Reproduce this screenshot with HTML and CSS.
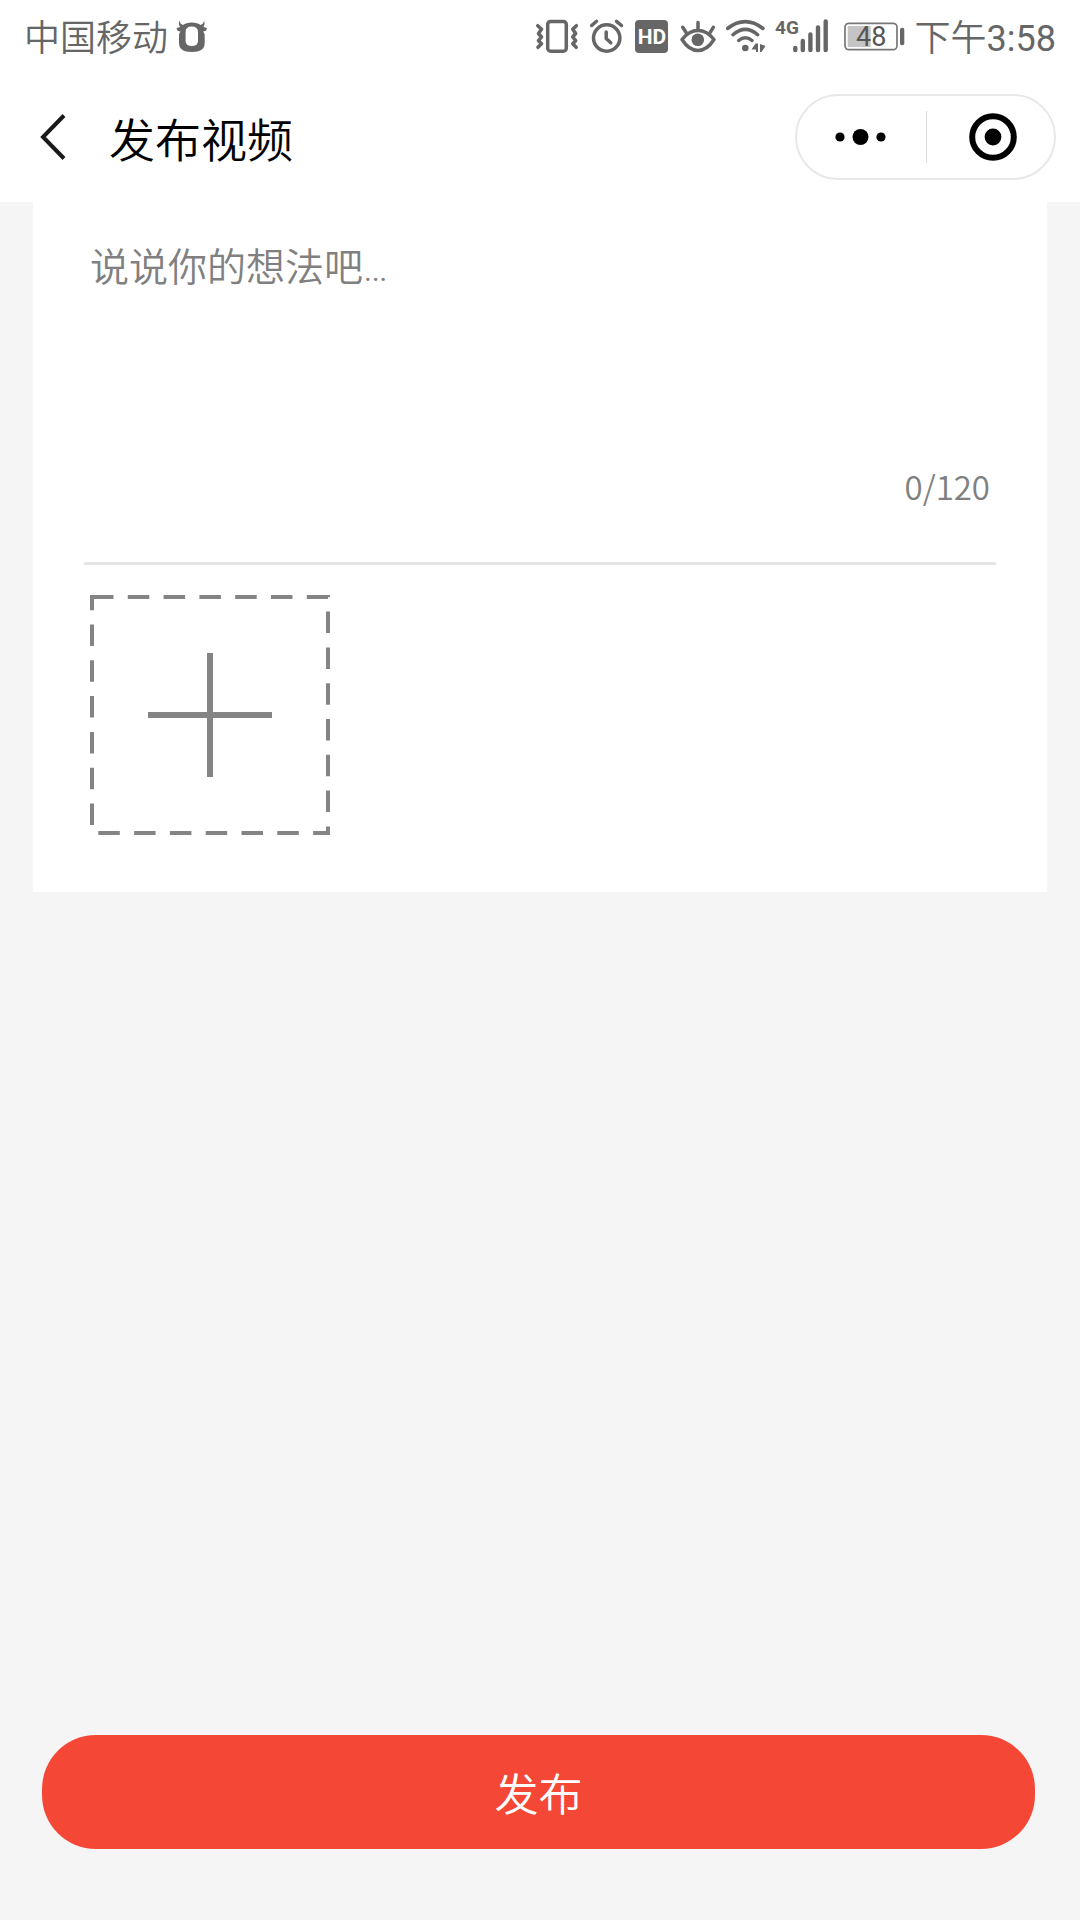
FILE: index.html
```html
<!DOCTYPE html>
<html lang="zh-CN">
<head>
  <meta charset="utf-8">
  <meta name="viewport" content="width=device-width, initial-scale=1">
  <title>发布视频</title>
  <link rel="stylesheet" href="styles.css">
</head>
<body>
  <div class="status-bar">
    <div class="status-group carrier">
      <span class="status-text">中国移动</span>
      <svg width="32" height="40" viewBox="0 0 32 40">
        <path fill="#666" fill-rule="evenodd" d="M3.500 4.500 Q4 8 7 9 Q10 6.500 15.800 6.500 Q21.600 6.500 24.600 9 Q27.600 8 28.100 4.500 Q29.500 8 27.500 11 L31 12 Q30.500 15.500 27 15.500 Q28.700 17 28.700 19 V27 Q28.700 36 15.800 36 Q3 36 3 27 V19 Q3 17 4.600 15.500 Q1 15.500 0.500 12 L4.100 11 Q2 8 3.500 4.500 Z M15.800 10.500 Q22 10.500 22 16 V25 Q22 30 15.800 30 Q9.600 30 9.600 25 V16 Q9.600 10.500 15.800 10.500 Z"/>
      </svg>
    </div>
    <div class="status-group">
      <!-- vibration -->
      <svg class="line-icon" width="43" height="40" viewBox="0 0 43 40">
        <rect x="11.700" y="5.400" width="18.600" height="29.800" rx="3"/>
        <path d="M1.800 9.700 L5.500 13.300 L2.500 17.500 L5.500 21 L2.500 24.700 L5.500 27.700 L2 31.300"/>
        <path d="M40.400 9.700 L36.700 13.300 L39.700 17.500 L36.700 21 L39.700 24.700 L36.700 27.700 L40.200 31.300"/>
      </svg>
      <!-- alarm -->
      <svg class="line-icon" width="35" height="40" viewBox="0 0 35 40">
        <circle cx="17.700" cy="22" r="13.200"/>
        <path d="M17.200 16 V22.500 L21.800 26.800 M2.700 9.500 L7.500 5.300 M27.500 5.300 L32.500 9.500"/>
      </svg>
      <!-- HD -->
      <svg width="35" height="40" viewBox="0 0 35 40">
        <rect x="1" y="4" width="33" height="33" rx="4" fill="#666"/>
        <text class="hd-text" x="18" y="28">HD</text>
      </svg>
      <!-- eye protection -->
      <svg class="line-icon" width="37" height="40" viewBox="0 0 37 40">
        <path d="M3 23.500 Q10 14.500 19 14.500 Q28 14.500 35 23.500 Q28 34.500 19 34.500 Q10 34.500 3 23.500 Z"/>
        <circle class="solid" cx="18.800" cy="23.700" r="6.300"/>
        <path d="M19 6.500 V13 M3.700 11.300 L7 16.300 M34.300 11.300 L31.200 16.300"/>
      </svg>
      <!-- wifi -->
      <svg class="line-icon" width="39" height="40" viewBox="0 0 39 40">
        <path d="M1.500 12.500 Q19.300 -1.300 37 12.500 M7 18.700 Q19.300 8 31.700 18.700 M12.700 24.500 Q19.300 19 26 24.500"/>
        <circle class="solid" cx="19.300" cy="32" r="3.300"/>
        <path class="solid" d="M29.500 27.500 H32 V36 H30 V33.500 H25.500 Z M34 28 L39.500 30 L35.500 36 H34 Z"/>
      </svg>
      <!-- mobile signal -->
      <svg width="59" height="40" viewBox="0 0 59 40">
        <text class="net-text" x="0" y="18">4G</text>
        <path fill="none" stroke="#666" stroke-width="4.400" stroke-linecap="round" d="M20.300 32 V34 M27.800 25 V34 M35.400 18.500 V34 M43 11.500 V34 M50.700 5.500 V34"/>
      </svg>
      <!-- battery -->
      <svg width="61" height="40" viewBox="0 0 61 40">
        <rect x="1" y="7.300" width="52" height="26.400" rx="4" fill="none" stroke="#777" stroke-width="1.700"/>
        <rect x="3.700" y="10" width="23" height="21" fill="#c4c4c4"/>
        <rect x="56" y="11.700" width="4.300" height="17.600" rx="2" fill="#666"/>
        <text class="battery-text" x="12" y="29.500">48</text>
      </svg>
      <span class="status-text">下午<span class="time">3:58</span></span>
    </div>
  </div>

  <header class="nav-bar">
    <button class="back" type="button" aria-label="返回">
      <svg width="28" height="50" viewBox="0 0 28 50">
        <path fill="none" stroke="#1a1a1a" stroke-width="4" d="M26 3.500 L5 25 L26 46.500"/>
      </svg>
    </button>
    <h1>发布视频</h1>
    <div class="capsule">
      <button type="button" aria-label="更多">
        <svg width="52" height="20" viewBox="0 0 52 20">
          <circle cx="5" cy="10" r="4.600"/>
          <circle cx="25.500" cy="10" r="8"/>
          <circle cx="46" cy="10" r="4.600"/>
        </svg>
      </button>
      <button class="close" type="button" aria-label="关闭">
        <svg width="48" height="48" viewBox="0 0 48 48">
          <circle cx="24" cy="24" r="20.800" fill="none" stroke="#000" stroke-width="6"/>
          <circle cx="24" cy="24" r="8.400"/>
        </svg>
      </button>
    </div>
  </header>

  <form class="publish-form">
    <div class="card">
      <div class="editor">
        <textarea id="content" maxlength="120" placeholder="说说你的想法吧…" aria-label="说说你的想法吧"></textarea>
        <div class="counter"><span id="count">0</span>/120</div>
      </div>
      <button class="upload" type="button" aria-label="添加视频">
        <svg width="240" height="240" viewBox="0 0 240 240">
          <rect x="2" y="2" width="236" height="236" fill="none" stroke="#848484" stroke-width="4" stroke-dasharray="21.500 14.300"/>
          <path fill="none" stroke="#848484" stroke-width="6" d="M120 58 V182 M58 120 H182"/>
        </svg>
      </button>
    </div>
    <button class="submit" type="submit">发布</button>
  </form>

  <script>
    var content = document.getElementById('content');

    content.addEventListener('input', function() {
      document.getElementById('count').textContent = content.value.length;
    });

    document.querySelector('.publish-form').addEventListener('submit', function(e) {
      e.preventDefault();
    });
  </script>
</body>
</html>
```
FILE: styles.css
```css
* {
  box-sizing: border-box;
}

body {
  margin: 0;
  min-height: 100vh;
  display: flex;
  flex-direction: column;
  background-color: #f5f5f5;
  font-family: "Noto Sans CJK SC", sans-serif;
  font-weight: 350;
}

button {
  padding: 0;
  border: none;
  background: none;
  font-family: inherit;
  font-weight: inherit;
  cursor: pointer;
}

svg {
  display: block;
}

/* Status bar */
.status-bar {
  display: flex;
  justify-content: space-between;
  height: 72px;
  padding: 0 24px;
  background-color: #fff;
  color: #666;
  font-family: Roboto, "Noto Sans CJK SC", sans-serif;
  font-size: 36px;
  line-height: 48px;
}

.status-group {
  display: flex;
  align-items: center;
  gap: 10px;
}

.carrier {
  gap: 8px;
}

.status-text {
  padding-top: 6px;
}

.time {
  font-weight: 400;
}

.line-icon {
  fill: none;
  stroke: #666;
  stroke-width: 3.5px;
  stroke-linecap: round;
  stroke-linejoin: round;
}

.line-icon .solid {
  fill: #666;
  stroke: none;
}

.hd-text {
  fill: #fff;
  font-size: 21px;
  font-weight: bold;
  text-anchor: middle;
}

.net-text {
  fill: #666;
  font-size: 19px;
  font-weight: bold;
}

.battery-text {
  fill: #555;
  font-size: 27px;
  font-weight: 400;
}

/* Title bar */
.nav-bar {
  display: flex;
  align-items: center;
  height: 130px;
  padding: 0 24px 0 38px;
  background-color: #fff;
}

.nav-bar h1 {
  flex: 1;
  margin: 0 0 0 43px;
  font-size: 46px;
  font-weight: inherit;
  line-height: 64px;
}

.capsule {
  display: flex;
  align-items: center;
  width: 261px;
  height: 86px;
  border: 2px solid #e8e8e8;
  border-radius: 43px;
}

.capsule button {
  display: flex;
  align-items: center;
  justify-content: center;
  width: 50%;
  height: 52px;
}

.capsule .close {
  padding-left: 6px;
  border-left: 1px solid #ddd;
}

/* Form */
.publish-form {
  flex: 1;
  display: flex;
  flex-direction: column;
  justify-content: space-between;
  padding: 0 33px 71px;
}

.card {
  padding: 38px 51px 57px;
  background-color: #fff;
}

.editor {
  padding: 0 6px 52px;
  border-bottom: 3px solid #e5e5e5;
}

.editor textarea {
  display: block;
  width: 100%;
  height: 222px;
  padding: 0;
  border: none;
  outline: none;
  resize: none;
  color: #333;
  font-family: Roboto, "Noto Sans CJK SC", sans-serif;
  font-size: 39px;
  font-weight: inherit;
  line-height: 56px;
}

.editor textarea::placeholder {
  color: #808080;
}

.counter {
  color: #808080;
  font-size: 33px;
  line-height: 48px;
  text-align: right;
}

.upload {
  display: block;
  margin: 30px 6px 0;
}

.submit {
  height: 114px;
  margin: 0 12px 0 9px;
  border-radius: 54px;
  background-color: #f44736;
  color: #fff;
  font-size: 44px;
}
```
